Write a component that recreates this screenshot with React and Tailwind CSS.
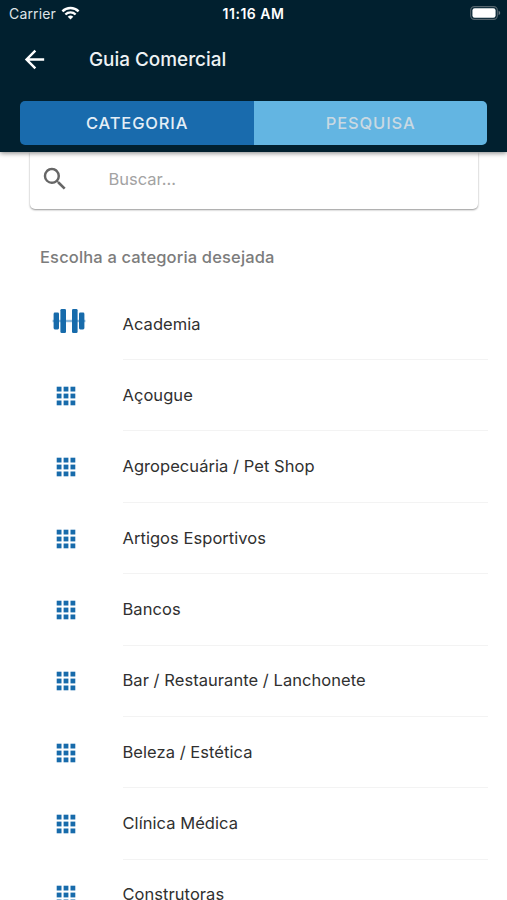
import React, { useState } from "react";

//Categorias do guia comercial
const categorias = [
  { nome: "Academia", icone: "academia" },
  { nome: "Açougue" },
  { nome: "Agropecuária / Pet Shop" },
  { nome: "Artigos Esportivos" },
  { nome: "Bancos" },
  { nome: "Bar / Restaurante / Lanchonete" },
  { nome: "Beleza / Estética" },
  { nome: "Clínica Médica" },
  { nome: "Construtoras" },
];

const IconeWifi = () => (
  <svg width="19" height="14" viewBox="0 0 18 14" fill="none" stroke="#fff" strokeWidth="2.4">
    <path d="M0.9 5.3a11.6 11.6 0 0 1 16.2 0" />
    <path d="M3.9 8.5a7.3 7.3 0 0 1 10.2 0" />
    <path d="M9 13.6 6.2 10.7a4.1 4.1 0 0 1 5.6 0Z" fill="#fff" stroke="none" />
  </svg>
);

const IconeBateria = () => (
  <svg width="31" height="14" viewBox="0 0 31 14" fill="none">
    <rect x="0.7" y="0.6" width="26.6" height="12.8" rx="3.6" stroke="#56666f" strokeWidth="1.1" />
    <rect x="2.4" y="2.3" width="23.2" height="9.4" rx="2.2" fill="#fff" />
    <path d="M28.6 4.8v4.4c1-.4 1.6-1.2 1.6-2.2s-.6-1.8-1.6-2.2Z" fill="#68777f" />
  </svg>
);

const IconeVoltar = () => (
  <svg width="29" height="29" viewBox="0 0 24 24" fill="#fff">
    <path d="M20 11H7.83l5.59-5.59L12 4l-8 8 8 8 1.41-1.41L7.83 13H20v-2z" />
  </svg>
);

const IconeBusca = () => (
  <svg width="30" height="30" viewBox="0 0 24 24" fill="#666">
    <path d="M15.5 14h-.79l-.28-.27A6.471 6.471 0 0 0 16 9.5 6.5 6.5 0 1 0 9.5 16c1.61 0 3.09-.59 4.23-1.57l.27.28v.79l5 4.99L20.49 19l-4.99-5zm-6 0C7.01 14 5 11.99 5 9.5S7.01 5 9.5 5 14 7.01 14 9.5 11.99 14 9.5 14z" />
  </svg>
);

const IconeAcademia = () => (
  <svg width="34" height="26" viewBox="0 0 34 26" fill="#176bab">
    <rect x="0.6" y="11.8" width="32.8" height="2.4" fill="#8fbadb" />
    <rect x="1.6" y="4.6" width="5.4" height="16.8" rx="1.3" />
    <rect x="8.4" y="1" width="5.6" height="24" rx="1.3" />
    <rect x="20" y="1" width="5.6" height="24" rx="1.3" />
    <rect x="27" y="4.6" width="5.4" height="16.8" rx="1.3" />
  </svg>
);

const IconeGrade = () => (
  <svg width="20" height="20" viewBox="0 0 20 20" fill="#176bab">
    {[0.7, 7.6, 14.5].map((y) =>
      [0.7, 7.6, 14.5].map((x) => (
        <rect key={`${x}-${y}`} x={x} y={y} width="4.8" height="4.8" />
      ))
    )}
  </svg>
);

const App = () => {
  const [aba, setAba] = useState("categoria");

  return (
    <div className="h-[900px] w-full overflow-hidden bg-white font-['Inter',sans-serif] text-[#303030]">
      {/*Cabecalho */}
      <header className="relative z-10 h-[152px] bg-[#01202f] shadow-[0_1px_5px_rgba(0,0,0,0.5)]">
        {/*Barra de status */}
        <div className="grid h-[27px] grid-cols-3 items-center px-[9px] text-white">
          <div className="flex items-center gap-[5px] text-[14px] tracking-[0.15px] text-[#dfe4e7]">
            <span>Carrier</span>
            <div className="mb-[2px]">
              <IconeWifi />
            </div>
          </div>
          <span className="text-center text-[14px] font-semibold tracking-[0.5px]">11:16 AM</span>
          <div className="-mr-[3px] mb-px flex justify-end">
            <IconeBateria />
          </div>
        </div>
        {/*Titulo */}
        <div className="flex h-[64px] items-center pl-5">
          <button>
            <IconeVoltar />
          </button>
          <h1 className="ml-10 pt-[2px] text-[18.9px] font-medium text-[#eef2f4]">Guia Comercial</h1>
        </div>
        {/*Abas */}
        <div className="ml-[20.4px] mr-[19.6px] mt-[10px] flex h-11 overflow-hidden rounded-[5px] text-[16.5px] font-medium tracking-[0.85px]">
          <button className="flex-1 bg-[#196bad] text-[#e4eef6]" onClick={() => setAba("categoria")}>
            CATEGORIA
          </button>
          <button className="flex-1 bg-[#63b5e2] text-[#c9d9e2]" onClick={() => setAba("pesquisa")}>
            PESQUISA
          </button>
        </div>
      </header>

      {aba && (
        <main>
          {/*Campo de busca */}
          <div className="ml-[30px] mr-[29px] flex h-[57px] items-center rounded-b-[5px] bg-white pl-[10px] pb-[3px] shadow-[0_1px_2px_rgba(0,0,0,0.42)]">
            <div className="mb-px">
              <IconeBusca />
            </div>
            <input
              placeholder="Buscar..."
              className="ml-[38.5px] w-72 text-[16.5px] outline-none placeholder:text-[#a3a3a3]"
            />
          </div>
          <h2 className="ml-10 mt-[36px] h-[43.8px] text-[16.5px] leading-6 font-medium tracking-[0.15px] text-[#7c7c7c]">
            Escolha a categoria desejada
          </h2>
          {/*Lista de categorias */}
          <ul>
            {categorias.map((categoria) => (
              <li key={categoria.nome} className="flex h-[71.35px]">
                <div className="ml-[48.5px] flex w-[34px] items-center justify-center">
                  {categoria.icone === "academia" ? (
                    <div className="mb-[6px] ml-[6px] shrink-0">
                      <IconeAcademia />
                    </div>
                  ) : (
                    <IconeGrade />
                  )}
                </div>
                <div className="ml-10 mr-[19px] flex flex-1 items-center border-b border-[#f3f3f3] text-[16.5px] tracking-[0.05px]">
                  {categoria.nome}
                </div>
              </li>
            ))}
          </ul>
        </main>
      )}
    </div>
  );
};

export default App;
